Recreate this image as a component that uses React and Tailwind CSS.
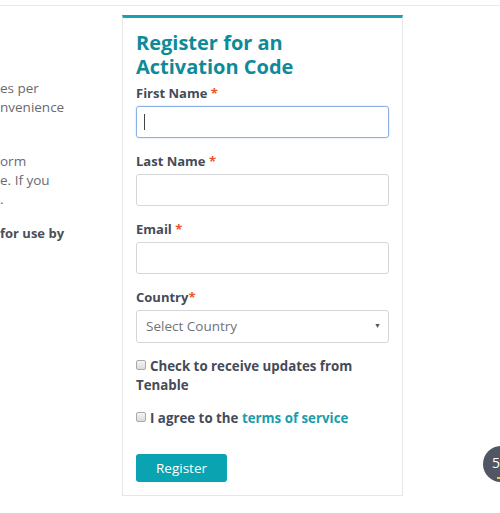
import React from "react";

function Label({ text, gap = true }) {
  return (
    <label className="block text-[13px] leading-[20px] font-bold text-[#454b57]">
      {text}
      {gap ? " " : ""}
      <span className="text-[#e8572a]">*</span>
    </label>
  );
}

function Checkbox() {
  return (
    <span className="inline-block w-[10px] h-[10px] mr-[4px] align-[1px] rounded-[2px] border border-[#a9a9a9] bg-gradient-to-b from-[#f4f4f4] to-[#dcdcdc]" />
  );
}

export default function App() {
  return (
    <div
      className="relative w-[500px] h-[513px] overflow-hidden bg-white"
      style={{ fontFamily: '"Open Sans", "Noto Sans", sans-serif' }}
    >
      <div className="h-[6px] border-b border-[#ebebeb]" />

      <div className="flex mt-[9px]">
        {/* left text, clipped by the window edge */}
        <div className="w-[122px] shrink-0 pt-[64px] text-[13.5px] leading-[19px] text-[#666b73] whitespace-nowrap">
          <p>es per</p>
          <p>nvenience</p>
          <p className="mt-[35px]">orm</p>
          <p>e. If you</p>
          <p>.</p>
          <p className="mt-[15px] text-[13px] font-bold text-[#4a4f5a]">for use by</p>
        </div>

        {/* register card */}
        <div className="w-[281px] shrink-0 border border-[#e6e6e6] border-t-[3px] border-t-[#16a2b0] px-[13px] pt-[13px] pb-[13px]">
          <h2 className="text-[20px] leading-[24px] font-bold text-[#0e8a99]">
            Register for an
            <br />
            Activation Code
          </h2>

          <div className="mt-[4px]">
            <Label text="First Name" />
            <div className="mt-[3px] h-[32px] rounded-[3px] border border-[#8bb0e8] shadow-[0_0_2px_#bcd2f3] flex items-center pl-[7px]">
              <span className="w-px h-[16px] bg-[#444]" />
            </div>
          </div>

          <div className="mt-[13px]">
            <Label text="Last Name" />
            <div className="mt-[3px] h-[32px] rounded-[3px] border border-[#d6d6d6]" />
          </div>

          <div className="mt-[13px]">
            <Label text="Email" />
            <div className="mt-[3px] h-[32px] rounded-[3px] border border-[#d6d6d6]" />
          </div>

          <div className="mt-[13px]">
            <Label text="Country" gap={false} />
            <div className="mt-[3px] h-[33px] rounded-[3px] border border-[#d6d6d6] flex items-center justify-between pl-[9px] pr-[7px]">
              <span className="text-[13.5px] text-[#6f737a]">Select Country</span>
              <span className="text-[7px] text-[#555]">▼</span>
            </div>
          </div>

          <p className="mt-[14px] text-[13.3px] leading-[19px] font-bold text-[#454b57]">
            <Checkbox />
            Check to receive updates from Tenable
          </p>

          <p className="mt-[14px] text-[13.3px] leading-[19px] font-bold text-[#454b57]">
            <Checkbox />
            I agree to the <span className="text-[#1a9dad]">terms of service</span>
          </p>

          <button className="mt-[26px] h-[28px] w-[91px] rounded-[3px] bg-[#09a3b1] text-white text-[13.5px]">
            Register
          </button>
        </div>
      </div>

      {/* floating chat badge */}
      <div className="absolute left-[483px] top-[446px] w-[36px] h-[36px] rounded-full bg-[#505664] overflow-hidden">
        <span className="absolute left-[9px] top-[7px] text-[14px] leading-[20px] text-white">5</span>
        <span className="absolute left-[14px] bottom-[3px] w-[8px] h-[2px] bg-[#e8d43a]" />
      </div>
    </div>
  );
}
